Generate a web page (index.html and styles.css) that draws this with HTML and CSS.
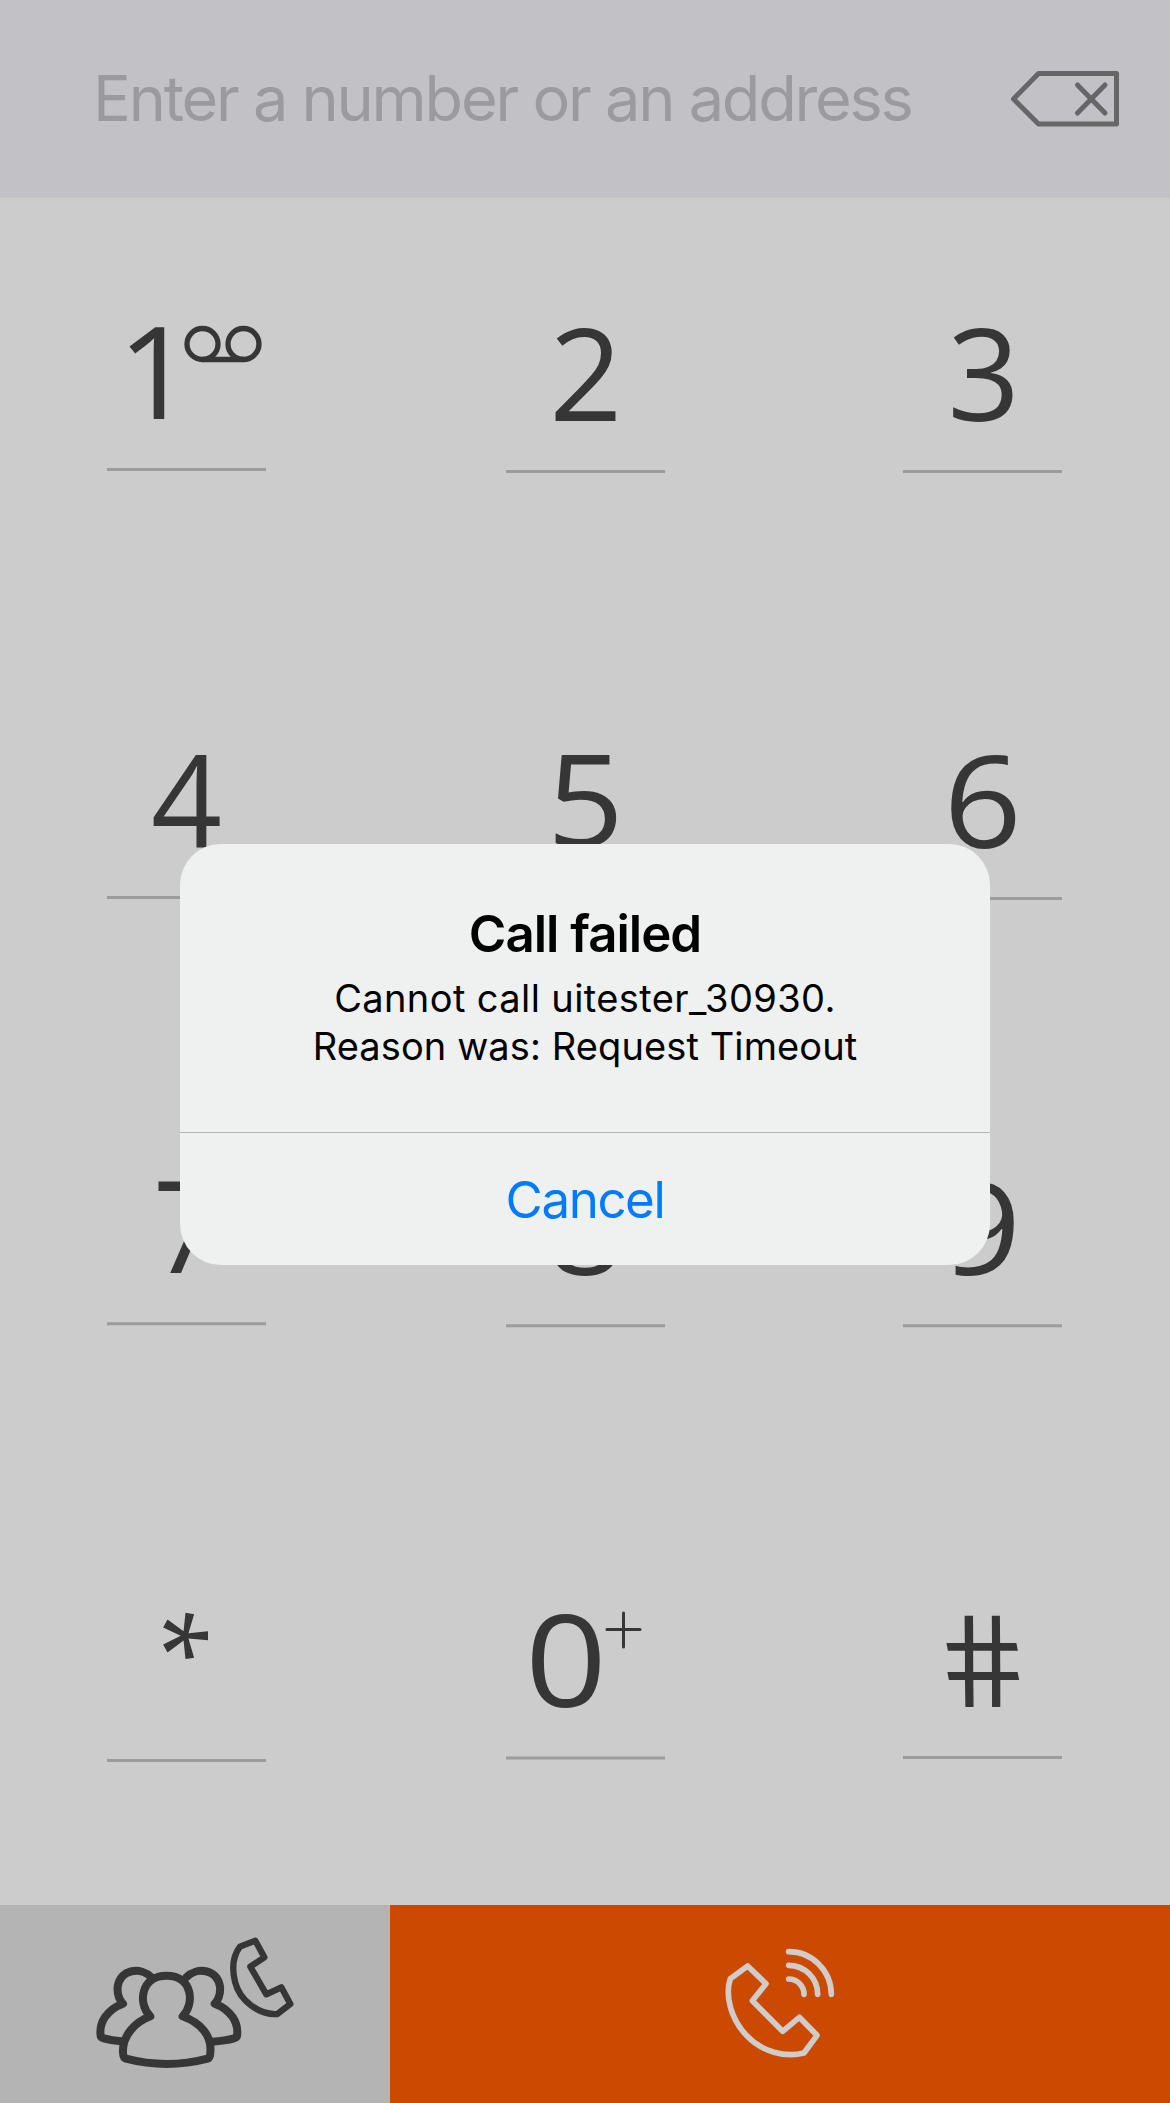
FILE: index.html
```html
<!DOCTYPE html>
<html lang="en">
<head>
<meta charset="utf-8">
<title>Dialer</title>
<link rel="stylesheet" href="styles.css">
</head>
<body>
<div class="phone">
  <header class="address-bar">
    <span class="placeholder">Enter a number or an address</span>
    <svg class="backspace" viewBox="0 0 110 56" width="110" height="56">
      <path d="M4.500 28 29.500 2.500H107.500V53H29.500Z"/>
      <path stroke-linecap="round" d="M68.500 14 96 42M96 14 68.500 42"/>
    </svg>
  </header>

  <main class="keypad">
    <svg class="key" viewBox="0 0 159 150">
      <text transform="translate(10.500 92) scale(1.040 1)">1</text>
      <g class="voicemail"><circle cx="95.500" cy="17" r="15.500"/><circle cx="136.500" cy="17" r="15.500"/><path d="M95.500 32.500H136.500"/></g>
      <path class="rule" d="M0 142.500H159"/>
    </svg>
    <svg class="key" viewBox="0 0 159 150"><text transform="translate(43.300 93.500)">2</text><path class="rule" d="M0 144.500H159"/></svg>
    <svg class="key" viewBox="0 0 159 150"><text transform="translate(44.500 93.500) scale(.99 1)">3</text><path class="rule" d="M0 144.500H159"/></svg>

    <svg class="key" viewBox="0 0 159 150"><text transform="translate(44 92.500) scale(.97 1)">4</text><path class="rule" d="M0 143.500H159"/></svg>
    <svg class="key" viewBox="0 0 159 150"><text transform="translate(41 92.500) scale(1.050 1)">5</text><path class="rule" d="M0 144.500H159"/></svg>
    <svg class="key" viewBox="0 0 159 150"><text transform="translate(40.500 93.500) scale(1.070 1)">6</text><path class="rule" d="M0 144.500H159"/></svg>

    <svg class="key" viewBox="0 0 159 150"><text transform="translate(46 91.500) scale(.95 1)">7</text><path class="rule" d="M0 142.800H159"/></svg>
    <svg class="key" viewBox="0 0 159 150"><text transform="translate(40.500 93.500) scale(1.060 1)">8</text><path class="rule" d="M0 144.800H159"/></svg>
    <svg class="key" viewBox="0 0 159 150"><text transform="translate(38.500 93.500) scale(1.090 1)">9</text><path class="rule" d="M0 144.800H159"/></svg>

    <svg class="key" viewBox="0 0 159 150"><text class="star" transform="translate(24 .5) rotate(90)">*</text><path class="rule" d="M0 152.500H159"/></svg>
    <svg class="key" viewBox="0 0 159 150">
      <text transform="translate(19 98.500) scale(1.120 1)">0</text>
      <path class="plus" d="M101 21.500H134M117.500 5V39"/>
      <path class="rule" d="M0 150H159"/>
    </svg>
    <svg class="key" viewBox="0 0 159 150"><text transform="translate(48 98.500) skewX(11) scale(.98 1)">#</text><path class="rule" d="M0 149.500H159"/></svg>
  </main>

  <footer class="actions">
    <div class="contacts">
      <svg viewBox="-210 45 1170 594" width="390" height="198">
        <g class="people">
          <path d="M241 379C202 342 212 257 290 257C368 257 375 342 338 379C390 398 426 435 421 488Q420 504 413 506Q290 538 168 506Q160 504 159 488C156 438 195 396 241 379Z"/>
          <path d="M244 262C213 230 151 236 143 290C141 313 147 328 159 341C112 358 86 397 92 438Q93 443 101 445Q126 452 154 454"/>
          <path d="M349 262C380 230 442 236 450 290C452 313 446 328 434 341C481 358 507 397 501 438Q500 443 492 445Q467 452 426 455"/>
        </g>
        <path class="handset" d="M510 170 556 152 583 202 541 230 589 313 634 292 661 342 622 372C568 376 509 332 495 275C484 230 492 194 510 170Z"/>
      </svg>
    </div>
    <div class="call">
      <svg viewBox="-900 -45 2340 594" width="780" height="198">
        <path d="M121 176 173 138 228 191 187 242 278 334 328 292 381 346 342 399C285 413 216 396 170 347C123 297 104 228 121 176Z"/>
        <g class="waves"><path d="M296 95A128 128 0 0 1 424 223"/><path d="M296 136A87 87 0 0 1 383 223"/><path d="M296 177A46 46 0 0 1 342 223"/></g>
      </svg>
    </div>
  </footer>

  <div class="alert" role="alertdialog">
    <div class="alert-body">
      <h1>Call failed</h1>
      <p><span class="line-one">Cannot call uitester_30930.</span><br><span class="line-two">Reason was: Request Timeout</span></p>
    </div>
    <div class="cancel">Cancel</div>
  </div>
</div>
</body>
</html>
```
FILE: styles.css
```css
* { box-sizing: border-box; }
body { margin: 0; font-family: Inter, "Liberation Sans", sans-serif; background: #ccc; }
svg { display: block; fill: none; }
.phone { position: relative; width: 1170px; height: 2103px; display: flex; flex-direction: column; overflow: hidden; }

.address-bar { height: 198px; flex: none; background: #c2c1c6; display: flex; align-items: center; justify-content: space-between; padding: 0 51px 0 93px; }
.placeholder { font-size: 63px; line-height: 80px; padding-bottom: 2px; color: #9b9a9f; white-space: nowrap; letter-spacing: -2.220px; }
.backspace { stroke: #666; stroke-width: 5; stroke-linejoin: round; }

.keypad { flex: 1; display: grid; grid-template-columns: 399px 397px 159px; grid-template-rows: 427px 427px 427px 150px; padding: 129px 0 0 107px; }
.key { width: 159px; height: 150px; overflow: visible; }
.key text { font: 400 128px "Open Sans", "Noto Sans", sans-serif; fill: #363636; }
.key .star { font-size: 100px; }
.rule { stroke: #9c9c9c; stroke-width: 3; }
.voicemail { stroke: #363636; stroke-width: 5.300; }
.plus { stroke: #363636; stroke-width: 3; stroke-linecap: round; }

.actions { height: 198px; flex: none; display: flex; }
.contacts { width: 390px; background: #b4b4b4; }
.call { flex: 1; background: #cb4a00; }
.actions svg { stroke-linejoin: round; stroke-linecap: round; }
.people { stroke: #363636; stroke-width: 24; }
.handset { stroke: #363636; stroke-width: 19; }
.call svg { stroke: #cfcccb; stroke-width: 17; }

.alert { position: absolute; left: 180px; top: 844px; width: 810px; height: 421px; border-radius: 41px; background: #eff1f0; display: flex; flex-direction: column; overflow: hidden; text-align: center; color: #000; }
.alert-body { height: 289px; flex: none; border-bottom: 1px solid #b3b4b4; padding-top: 60px; }
.alert h1 { margin: 0; font-size: 51px; line-height: 60px; font-weight: 600; letter-spacing: -1px; }
.alert p { margin: 10px 0 0; font-size: 38px; line-height: 48px; }
.line-one { letter-spacing: .4px; }
.line-two { letter-spacing: .1px; }
.cancel { height: 132px; flex: none; font-size: 51px; line-height: 134px; letter-spacing: -1.400px; color: #007aff; }
```
